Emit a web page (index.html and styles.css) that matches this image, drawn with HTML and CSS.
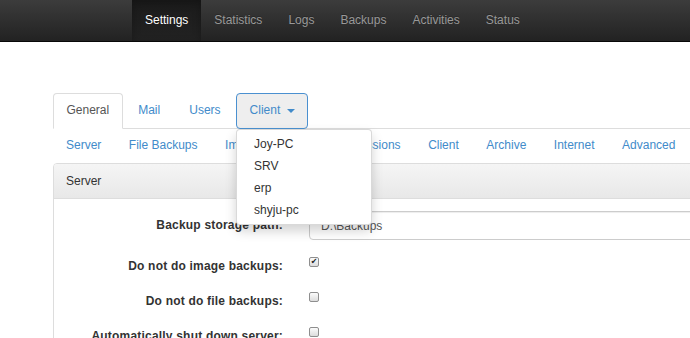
FILE: index.html
```html
<!DOCTYPE html>
<html lang="en">
<head>
  <meta charset="UTF-8">
  <title>Settings</title>
  <link rel="stylesheet" href="styles.css">
</head>
<body>
  <div class="navbar">
    <ul class="nav-main">
      <li class="active"><a href="#">Settings</a></li>
      <li><a href="#">Statistics</a></li>
      <li><a href="#">Logs</a></li>
      <li><a href="#">Backups</a></li>
      <li><a href="#">Activities</a></li>
      <li><a href="#">Status</a></li>
    </ul>
  </div>
  <div class="page">
    <ul class="tabs">
      <li class="active"><a href="#">General</a></li>
      <li><a href="#">Mail</a></li>
      <li><a href="#">Users</a></li>
      <li class="open">
        <a href="#">Client <span class="caret"></span></a>
        <ul class="dropdown">
          <li><a href="#">Joy-PC</a></li>
          <li><a href="#">SRV</a></li>
          <li><a href="#">erp</a></li>
          <li><a href="#">shyju-pc</a></li>
        </ul>
      </li>
    </ul>
    <ul class="subtabs">
      <li><a href="#">Server</a></li>
      <li><a href="#">File Backups</a></li>
      <li><a href="#">Image Backups</a></li>
      <li><a href="#">Permissions</a></li>
      <li><a href="#">Client</a></li>
      <li><a href="#">Archive</a></li>
      <li><a href="#">Internet</a></li>
      <li><a href="#">Advanced</a></li>
    </ul>
    <div class="panel">
      <div class="panel-heading">Server</div>
      <div class="panel-body">
        <div class="form-row">
          <label class="control-label">Backup storage path:</label>
          <div class="field"><input type="text" class="text-input" value="D:\Backups"></div>
        </div>
        <div class="form-row">
          <label class="control-label">Do not do image backups:</label>
          <div class="field"><span class="check checked">&#10004;</span></div>
        </div>
        <div class="form-row">
          <label class="control-label">Do not do file backups:</label>
          <div class="field"><span class="check"></span></div>
        </div>
        <div class="form-row">
          <label class="control-label">Automatically shut down server:</label>
          <div class="field"><span class="check"></span></div>
        </div>
      </div>
    </div>
  </div>
</body>
</html>
```

FILE: styles.css
```css
* {
  box-sizing: border-box;
  margin: 0;
  padding: 0;
}
html, body {
  overflow: hidden;
}
body {
  font-family: "Liberation Sans", Arial, sans-serif;
  font-size: 12px;
  line-height: 17px;
  color: #333;
  background: #fff;
}
ul {
  list-style: none;
}
a {
  color: #428bca;
  text-decoration: none;
}
.navbar {
  height: 42px;
  padding-left: 132px;
  background: linear-gradient(#3c3c3c, #222);
  border-bottom: 1px solid #080808;
}
.nav-main {
  display: flex;
}
.nav-main a {
  display: block;
  padding: 0 13px;
  line-height: 41px;
  color: #999;
  text-shadow: 0 -1px 0 rgba(0, 0, 0, 0.25);
}
.nav-main .active a {
  color: #fff;
  background: linear-gradient(#1b1b1b, #222);
  box-shadow: inset 0 3px 9px rgba(0, 0, 0, 0.25);
}
.page {
  width: 700px;
  margin: 51px 0 0 53px;
}
.tabs {
  display: flex;
  border-bottom: 1px solid #ddd;
}
.tabs > li {
  position: relative;
  margin: 0 2px -1px 0;
}
.tabs > li > a {
  display: block;
  height: 36px;
  padding: 8px 12.5px;
  border: 1px solid transparent;
  border-radius: 4px 4px 0 0;
}
.tabs > li.active > a {
  color: #555;
  background: #fff;
  border-color: #ddd #ddd transparent;
}
.tabs > li.open > a {
  background: #eee;
  border-color: #4a90d0;
  border-radius: 4px;
}
.caret {
  display: inline-block;
  width: 0;
  height: 0;
  margin-left: 3px;
  vertical-align: middle;
  border-top: 4px solid;
  border-left: 4px solid transparent;
  border-right: 4px solid transparent;
}
.dropdown {
  position: absolute;
  top: 100%;
  left: 0;
  z-index: 10;
  min-width: 136px;
  padding: 3px 0;
  background: #fff;
  border: 1px solid rgba(0, 0, 0, 0.15);
  border-radius: 4px;
  box-shadow: 0 6px 12px rgba(0, 0, 0, 0.175);
}
.dropdown a {
  display: block;
  padding: 0 17px;
  line-height: 22px;
  color: #333;
}
.subtabs {
  display: flex;
}
.subtabs a {
  display: block;
  padding: 7px 12px 8px;
  margin-right: 1.5px;
  border: 1px solid transparent;
}
.panel {
  border: 1px solid #ddd;
  border-radius: 4px;
}
.panel-heading {
  padding: 9px 12px 8px;
  background: linear-gradient(#f5f5f5, #e8e8e8);
  border-bottom: 1px solid #ddd;
  border-radius: 3px 3px 0 0;
}
.panel-body {
  padding: 12px 0;
}
.form-row {
  display: grid;
  grid-template-columns: 242px 1fr;
  margin-bottom: 13px;
}
.control-label {
  padding: 6px 13px 0 0;
  text-align: right;
  font-weight: bold;
  letter-spacing: 0.2px;
}
.form-row:not(:first-child) .control-label {
  padding-top: 5px;
}
.field {
  padding-left: 13px;
  min-height: 22px;
}
.text-input {
  width: 100%;
  height: 29px;
  padding: 0 11px;
  font: inherit;
  color: #555;
  border: 1px solid #ccc;
  border-radius: 4px;
  box-shadow: inset 0 1px 1px rgba(0, 0, 0, 0.075);
}
.check {
  display: block;
  width: 10px;
  height: 10px;
  margin-top: 4px;
  border: 1px solid #8e8e8e;
  border-radius: 2px;
  background: linear-gradient(#fbfbfb, #dcdcdc);
  font-family: "DejaVu Sans", sans-serif;
  font-size: 8px;
  line-height: 8px;
  text-align: center;
  color: #222;
}
```
